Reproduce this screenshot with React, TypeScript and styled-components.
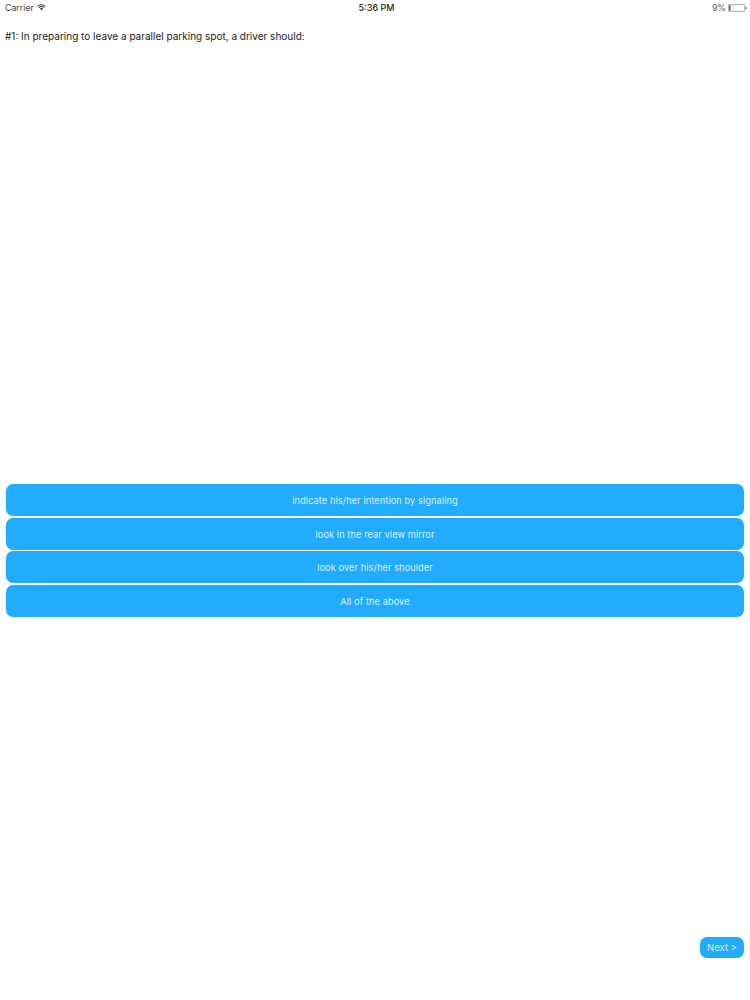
import React from "react";
import styled, { createGlobalStyle } from "styled-components";

const Global = createGlobalStyle`
  html, body { margin: 0; padding: 0; background: #fff; }
  body { font-family: Inter, "Liberation Sans", sans-serif; }
`;

const Page = styled.div`
  width: 750px;
  height: 1000px;
  display: flex;
  flex-direction: column;
  overflow: hidden;
  background: #fff;
`;

const StatusBar = styled.div`
  height: 15px;
  display: grid;
  grid-template-columns: 1fr auto 1fr;
  align-items: center;
  padding: 0 3px 0 5px;
  font-size: 8.8px;
  color: #444;
`;

const StatusLeft = styled.div`
  display: flex;
  align-items: center;
  gap: 3px;
`;

const Clock = styled.div`
  font-size: 9px;
  font-weight: 500;
  color: #222;
  margin-left: 1px;
`;

const StatusRight = styled.div`
  display: flex;
  align-items: center;
  justify-content: flex-end;
  gap: 2px;
  color: #555;
`;

const Question = styled.p`
  margin: 14px 0 0;
  padding: 0 5px;
  height: 455px;
  font-size: 10px;
  line-height: 15px;
  color: #222;
`;

const Answers = styled.div`
  display: flex;
  flex-direction: column;
  gap: 1.67px;
  padding: 0 6px;
`;

const Answer = styled.button`
  height: 32px;
  padding: 1px 0 0;
  border: 0;
  border-radius: 7px;
  background: #22acff;
  color: #d9f1ff;
  font-family: inherit;
  font-size: 9.2px;
  letter-spacing: 0.1px;
`;

const Footer = styled.div`
  margin-top: auto;
  display: flex;
  justify-content: flex-end;
  padding: 0 6px 42px;
`;

const NextButton = styled.button`
  width: 44px;
  height: 21px;
  padding: 0;
  border: 0;
  border-radius: 7px;
  background: #22acff;
  color: #d9f1ff;
  font-family: inherit;
  font-size: 9.5px;
`;

const Wifi = () => (
  <svg width="9" height="7" viewBox="0 0 10 8" fill="none" stroke="#333" strokeWidth="1.2">
    <path d="M0.5 2.6C3 0.3 7 0.3 9.5 2.6" />
    <path d="M2 4.2C3.7 2.7 6.3 2.7 8 4.2" />
    <path d="M3.4 5.7C4.3 5 5.7 5 6.6 5.7" />
    <path d="M5 7.8L4 6.6C4.6 6.2 5.4 6.2 6 6.6Z" fill="#333" stroke="none" />
  </svg>
);

const Battery = () => (
  <svg width="19" height="8" viewBox="0 0 19 8">
    <rect x="0.4" y="0.6" width="16.4" height="6.8" rx="1" fill="none" stroke="#888" strokeWidth="0.7" />
    <rect x="1" y="1.2" width="1.6" height="5.6" fill="#d9304f" />
    <rect x="17.2" y="2.9" width="1.2" height="2.2" fill="#777" />
  </svg>
);

const answers = [
  "indicate his/her intention by signaling",
  "look in the rear view mirror",
  "look over his/her shoulder",
  "All of the above",
];

export default function App() {
  return (
    <Page>
      <Global />
      <StatusBar>
        <StatusLeft>
          Carrier <Wifi />
        </StatusLeft>
        <Clock>5:36 PM</Clock>
        <StatusRight>
          9% <Battery />
        </StatusRight>
      </StatusBar>
      <Question>#1: In preparing to leave a parallel parking spot, a driver should:</Question>
      <Answers>
        {answers.map((a) => (
          <Answer key={a}>{a}</Answer>
        ))}
      </Answers>
      <Footer>
        <NextButton>{"Next >"}</NextButton>
      </Footer>
    </Page>
  );
}
